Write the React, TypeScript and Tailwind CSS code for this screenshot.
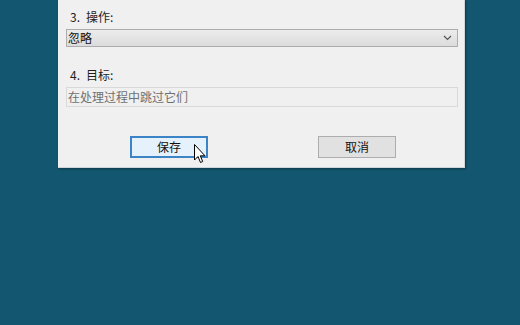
import React from "react";

export default function App() {
  const font = { fontFamily: '"Noto Sans CJK SC", "Noto Sans", sans-serif' };
  return (
    <div className="relative w-[520px] h-[325px] bg-[#13566f] overflow-hidden" style={font}>
      <div className="ml-[58px] w-[407px] h-[168px] bg-[#f0f0f0] border-r border-b border-[#cfd6da] shadow-[1px_1px_2px_rgba(0,0,0,0.35)] pl-[8px] pr-[6px] pt-[9px] flex flex-col">
        <div className="h-[16px] flex items-center text-[12px] text-[#1e1e1e] pl-[4px] gap-[6px] leading-none">
          <span>3.</span>
          <span>操作:</span>
        </div>
        <div className="mt-[4px] h-[18px] border border-[#acacac] bg-gradient-to-b from-[#ececec] to-[#dcdcdc] flex items-center justify-between pl-[1px] pr-[5px]">
          <span className="text-[12px] text-[#111] leading-none">忽略</span>
          <svg width="9" height="6" viewBox="0 0 9 6">
            <path d="M1 1 L4.5 4.5 L8 1" fill="none" stroke="#555" strokeWidth="1.2" />
          </svg>
        </div>
        <div className="mt-[20px] h-[16px] flex items-center text-[12px] text-[#1e1e1e] pl-[4px] gap-[6px] leading-none">
          <span>4.</span>
          <span>目标:</span>
        </div>
        <div className="mt-[4px] h-[20px] border border-[#d9d9d9] bg-[#f0f0f0] flex items-center pl-[1px]">
          <span className="text-[12px] text-[#6f6f6f] leading-none">在处理过程中跳过它们</span>
        </div>
        <div className="mt-[29px] h-[22px] flex pl-[64px] gap-[110px]">
          <div className="w-[78px] h-[22px] border-2 border-[#3d84c6] bg-[#e5f1fb] flex items-center justify-center text-[12px] text-[#111] leading-none">
            保存
          </div>
          <div className="w-[78px] h-[22px] border border-[#adadad] bg-[#e1e1e1] flex items-center justify-center text-[12px] text-[#111] leading-none">
            取消
          </div>
        </div>
      </div>
      <svg className="absolute left-[194px] top-[144px]" width="13" height="20" viewBox="0 0 13 20">
        <path
          d="M0.5 0.5 L0.5 16 L4 12.5 L6.5 18.5 L8.7 17.5 L6.3 11.8 L11 11.8 Z"
          fill="#fff"
          stroke="#000"
          strokeWidth="1"
          strokeLinejoin="miter"
        />
      </svg>
    </div>
  );
}
